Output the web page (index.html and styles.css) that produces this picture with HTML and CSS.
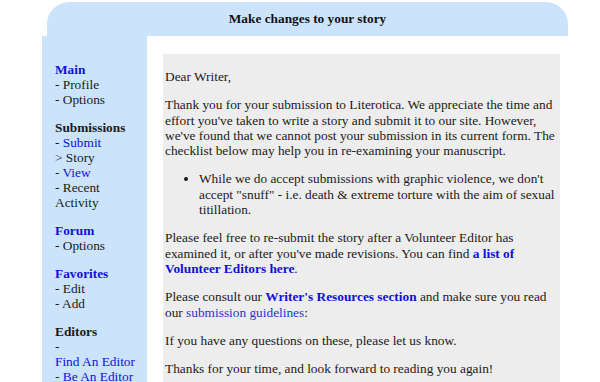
FILE: index.html
```html
<!DOCTYPE html>
<html lang="en">
<head>
  <meta charset="UTF-8" />
  <title>Make changes to your story</title>
  <link rel="stylesheet" href="styles.css">
</head>
<body>
  <div class="page">
    <div class="title-bar">Make changes to your story</div>
    <div class="layout">
      <div class="sidebar">
        <p><a class="head" href="#">Main</a><br>- Profile<br>- Options</p>
        <p><b>Submissions</b><br>- <a href="#">Submit</a><br>&gt; Story<br><a href="#">- View</a><br>- Recent Activity</p>
        <p><a class="head" href="#">Forum</a><br>- Options</p>
        <p><a class="head" href="#">Favorites</a><br>- Edit<br>- Add</p>
        <p><b>Editors</b><br>- <a class="nowrap" href="#">Find An Editor</a><br><a class="nowrap" href="#">- Be An Editor</a></p>
      </div>
      <div class="main">
        <div class="letter">
          <p>Dear Writer,</p>
          <p>Thank you for your submission to Literotica. We appreciate the time and effort you've taken to write a story and submit it to our site. However, we've found that we cannot post your submission in its current form. The checklist below may help you in re-examining your manuscript.</p>
          <ul>
            <li>While we do accept submissions with graphic violence, we don't accept "snuff" - i.e. death &amp; extreme torture with the aim of sexual titillation.</li>
          </ul>
          <p>Please feel free to re-submit the story after a Volunteer Editor has examined it, or after you've made revisions. You can find <a class="strong" href="#">a list of Volunteer Editors here</a>.</p>
          <p>Please consult our <a class="strong" href="#">Writer's Resources section</a> and make sure you read our <a class="soft" href="#">submission guidelines</a>:</p>
          <p>If you have any questions on these, please let us know.</p>
          <p>Thanks for your time, and look forward to reading you again!</p>
        </div>
      </div>
    </div>
  </div>
</body>
</html>
```

FILE: styles.css
```css
body {
  font-family: "Liberation Serif", "Times New Roman", serif;
  font-size: 13.33px;
  line-height: 15.3px;
  margin: 0;
  padding: 0;
  background: #fff;
  color: #1a1a1a;
}
a {
  color: #1010d8;
  text-decoration: none;
}
p {
  margin: 13px 0;
}
.page {
  width: 526px;
  margin-left: 42px;
  padding-top: 2px;
}
.title-bar {
  margin-left: 5px;
  height: 34px;
  display: flex;
  align-items: center;
  justify-content: center;
  background: #cce4fb;
  border-radius: 22px 22px 0 0;
  font-weight: bold;
  color: #111;
}
.layout {
  display: flex;
  min-height: 346px;
}
.sidebar {
  width: 79px;
  flex-shrink: 0;
  padding: 13px;
  background: #cce4fb;
  line-height: 15px;
}
.sidebar .head {
  font-weight: bold;
}
.sidebar .nowrap {
  white-space: nowrap;
}
.main {
  flex: 1;
  padding: 18px 8px 0 16px;
}
.letter {
  background: #ededed;
  padding: 2px 2px 4px 2px;
}
.letter ul {
  margin: 13px 0;
  padding-left: 34px;
}
.letter .strong {
  font-weight: bold;
}
.letter .soft {
  color: #3030c8;
}
```
